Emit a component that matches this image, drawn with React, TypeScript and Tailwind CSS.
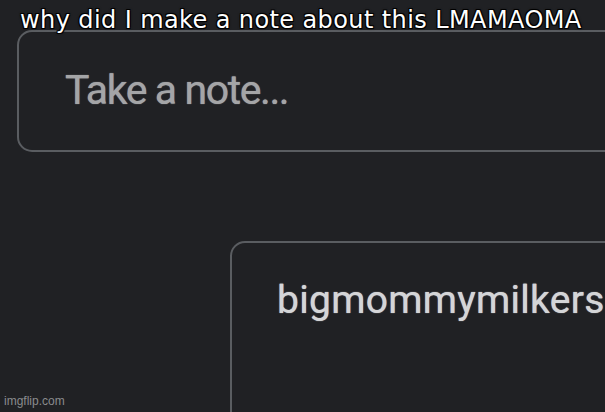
export default function App() {
  return (
    <div className="relative w-[605px] h-[412px] overflow-hidden bg-[#202124] font-['Roboto',sans-serif]">
      <div className="flex flex-col">
        <div className="ml-[17px] mt-[30px] w-[640px] h-[122px] rounded-[15px] border-2 border-[#5a5d61] flex items-center pl-[46px]">
          <span className="text-[41px] leading-none text-[#a4a5a7] tracking-[-1.4px] mt-[-1px] [text-shadow:_0_0_1px_#a4a5a7]">Take a note...</span>
        </div>
        <div className="ml-[230px] mt-[89px] w-[420px] h-[200px] rounded-[15px] border-2 border-[#5a5d61] pt-[38px] pl-[45px]">
          <span className="text-[39px] leading-none text-[#d4d5d7] tracking-[0.3px] [text-shadow:_0_0_1px_#d4d5d7]">bigmommymilkers</span>
        </div>
      </div>

      <div className="absolute left-[20px] top-[8px] flex">
        <span className="text-[24px] leading-none text-white font-['DejaVu_Sans',sans-serif] tracking-[0.4px] [text-shadow:_-1px_-1px_0_#000,_1px_-1px_0_#000,_-1px_1px_0_#000,_1px_1px_0_#000,_0_0_3px_#000]">
          why did I make a note about this LMAMAOMA
        </span>
      </div>

      <span className="absolute left-[4px] bottom-[2px] text-[12px] text-[#8a8b8d] font-['Liberation_Sans',sans-serif]">imgflip.com</span>
    </div>
  );
}
